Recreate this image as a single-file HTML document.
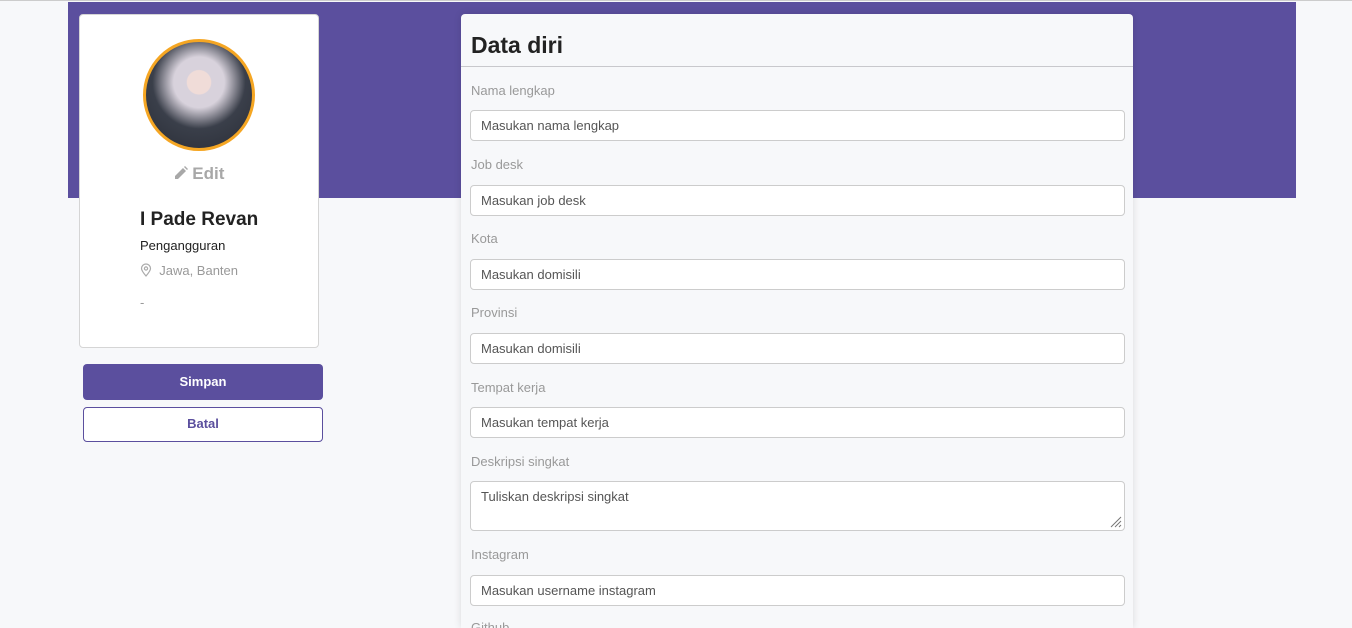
<!DOCTYPE html><html><head><style>
html,body{margin:0;overflow:hidden;height:628px}
body{background:#f7f8fa;font-family:"Liberation Sans",sans-serif;width:1352px;position:relative}
.top{position:absolute;left:0;top:0;width:1352px;height:1px;background:#ccc}
.band{position:absolute;left:68px;top:2px;width:1228px;height:196px;background:#5b4f9e}
.lc{position:absolute;left:79px;top:14px;width:238px;height:332px;background:#fff;border:1px solid #d5d5d5;border-radius:4px}
.av{position:absolute;left:63px;top:24px;width:112px;height:112px;border:3px solid #f5a623;border-radius:50%;background:radial-gradient(circle at 50% 38%,#f0dcd8 0 14%,#d8d2dc 15% 30%,#3a3f4a 55%,#2a2d36 100%);box-sizing:border-box}
.edit{position:absolute;left:0;width:238px;top:149px;text-align:center;color:#a8a8a8;font-size:17px;font-weight:bold}
.name{position:absolute;left:60px;top:194px;font-size:19px;font-weight:bold;color:#222}
.job{position:absolute;left:60px;top:223px;font-size:13px;color:#222}
.loc{position:absolute;left:60px;top:248px;font-size:13px;color:#999}
.dash{position:absolute;left:60px;top:280px;font-size:13px;color:#999}
.btn{position:absolute;left:83px;width:240px;box-sizing:border-box;border-radius:4px;text-align:center;font-size:13px;font-weight:bold}
.rc{position:absolute;left:461px;top:14px;width:672px;height:614px;background:#f7f8fa;border-radius:4px 4px 0 0;box-shadow:0 0 8px rgba(0,0,0,.12);overflow:hidden}
.rc h2{margin:0;position:absolute;left:10px;top:18px;font-size:23px;color:#222}
.hr{position:absolute;left:0;top:52px;width:672px;height:1px;background:#c8c8cc}
.lbl{position:absolute;left:10px;font-size:13px;color:#999}
.in{position:absolute;left:9px;width:655px;height:31px;box-sizing:border-box;background:#fff;border:1px solid #ccc;border-radius:4px;padding:7px 10px;font-size:13px;color:#555}
</style></head><body>
<div class="top"></div><div class="band"></div>
<div class="lc">
<div class="av"></div>
<div class="edit"><svg width="14" height="14" viewBox="0 0 14 14" style="vertical-align:-1px"><path d="M1 13v-3l8-8 3 3-8 8zM10 1l1-1 3 3-1 1z" fill="#a8a8a8"/></svg> Edit</div>
<div class="name">I Pade Revan</div>
<div class="job">Pengangguran</div>
<div class="loc"><svg width="12" height="14" viewBox="0 0 12 14" style="vertical-align:-2px"><path d="M6 13C3 9.5 1.5 7.5 1.5 5.5a4.5 4.5 0 019 0C10.5 7.5 9 9.5 6 13z" fill="none" stroke="#aaa" stroke-width="1.2"/><circle cx="6" cy="5.5" r="1.6" fill="none" stroke="#aaa" stroke-width="1.2"/></svg>&nbsp; Jawa, Banten</div>
<div class="dash">-</div>
</div>
<div class="btn" style="top:364px;height:36px;line-height:36px;background:#5b4f9e;color:#fff">Simpan</div>
<div class="btn" style="top:407px;height:35px;line-height:32px;border:1px solid #5b4f9e;color:#5b4f9e;background:#fff">Batal</div>
<div class="rc">
<h2>Data diri</h2><div class="hr"></div>
<div class="lbl" style="top:69px">Nama lengkap</div><div class="in" style="top:96px">Masukan nama lengkap</div>
<div class="lbl" style="top:143px">Job desk</div><div class="in" style="top:171px">Masukan job desk</div>
<div class="lbl" style="top:217px">Kota</div><div class="in" style="top:245px">Masukan domisili</div>
<div class="lbl" style="top:291px">Provinsi</div><div class="in" style="top:319px">Masukan domisili</div>
<div class="lbl" style="top:366px">Tempat kerja</div><div class="in" style="top:393px">Masukan tempat kerja</div>
<div class="lbl" style="top:440px">Deskripsi singkat</div><div class="in" style="top:467px;height:50px">Tuliskan deskripsi singkat<svg width="12" height="12" viewBox="0 0 12 12" style="position:absolute;right:2px;bottom:2px"><path d="M11 1L1 11M11 5L5 11M11 9L9 11" stroke="#777" stroke-width="1"/></svg></div>
<div class="lbl" style="top:533px">Instagram</div><div class="in" style="top:561px">Masukan username instagram</div>
<div class="lbl" style="top:606px">Github</div>
</div>
</body></html>
